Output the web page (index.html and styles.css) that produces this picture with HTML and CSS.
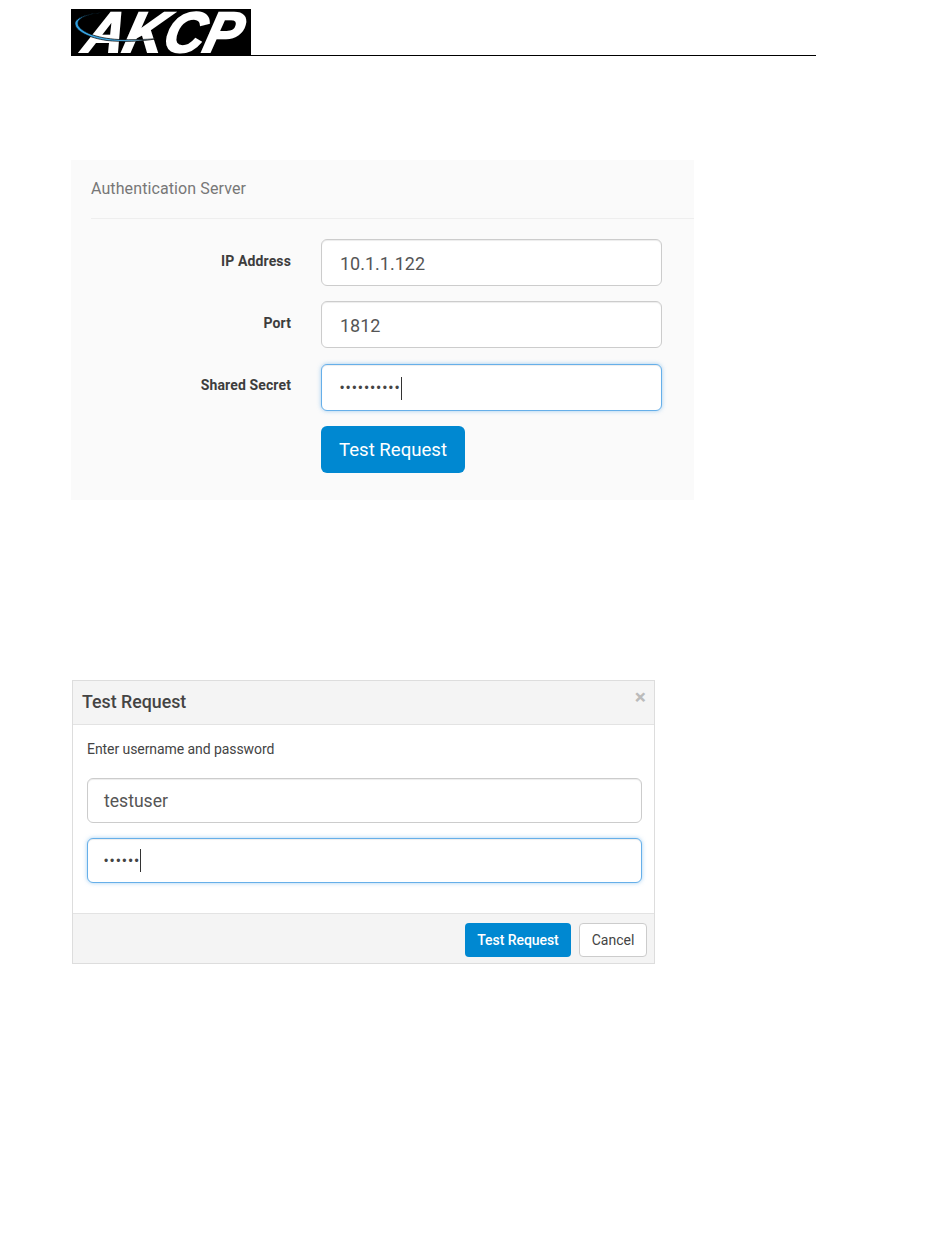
FILE: index.html
```html
<!DOCTYPE html>
<html lang="en">
<head>
<meta charset="utf-8">
<title>AKCP Test Request</title>
<link rel="stylesheet" href="styles.css">
</head>
<body>
<header class="page-header">
  <svg class="logo" width="180" height="46" viewBox="0 0 180 46" role="img" aria-label="AKCP">
    <defs>
      <linearGradient id="swoosh" x1="0" y1="0" x2="1" y2="0">
        <stop offset="0" stop-color="#2f9fe0"/>
        <stop offset="0.6" stop-color="#4fb2e8"/>
        <stop offset="1" stop-color="#cfe9f7"/>
      </linearGradient>
    </defs>
    <rect width="180" height="46" fill="#000"/>
    <text class="logo-text" transform="translate(10 43) skewX(-14)" textLength="157" lengthAdjust="spacingAndGlyphs">AKCP</text>
    <path d="M32 3.500C17 5 6.500 9 7 14.500C7.500 22 25 29.500 48 30.500C60 31 74 30.500 85 29.800C72 32.500 50 33.200 36 31.500C18 29 4 22 4 14.500C4 9 16 4.500 32 3.500Z" fill="url(#swoosh)" stroke="#000" stroke-width="0.7"/>
  </svg>
</header>

<section class="panel">
  <h2 class="panel-title">Authentication Server</h2>
  <div class="form">
    <div class="row">
      <div class="label">IP Address</div>
      <div class="field">10.1.1.122</div>
    </div>
    <div class="row">
      <div class="label">Port</div>
      <div class="field">1812</div>
    </div>
    <div class="row">
      <div class="label">Shared Secret</div>
      <div class="field focus"><span class="dots">••••••••••</span><span class="caret"></span></div>
    </div>
    <div class="row">
      <div class="label"></div>
      <div class="btn btn-large">Test Request</div>
    </div>
  </div>
</section>

<section class="modal">
  <div class="modal-head">
    <h3 class="modal-title">Test Request</h3>
    <span class="close">×</span>
  </div>
  <div class="modal-body">
    <p class="prompt">Enter username and password</p>
    <div class="field field-modal">testuser</div>
    <div class="field field-modal focus"><span class="dots">••••••</span><span class="caret caret-modal"></span></div>
  </div>
  <div class="modal-foot">
    <div class="btn btn-small">Test Request</div>
    <div class="btn-cancel">Cancel</div>
  </div>
</section>
</body>
</html>
```

FILE: styles.css
```css
* { box-sizing: border-box; }
html, body { margin: 0; padding: 0; background: #fff; }
body {
  width: 950px;
  height: 1260px;
  overflow: hidden;
  font-family: Roboto, "Liberation Sans", sans-serif;
  color: #444;
}
.page-header {
  margin: 9px 0 0 71px;
  width: 745px;
  height: 47px;
  border-bottom: 1px solid #000;
}
.logo { display: block; overflow: visible; }
.logo-text {
  font-family: "Liberation Sans", sans-serif;
  font-weight: 700;
  font-style: italic;
  font-size: 57px;
  fill: #fff;
  stroke: #fff;
  stroke-width: 2px;
}
.panel {
  margin: 104px 0 0 71px;
  width: 623px;
  height: 340px;
  background: #fafafa;
  padding-left: 20px;
}
.panel-title {
  margin: 0;
  height: 59px;
  padding-top: 19px;
  font-size: 16px;
  line-height: 19px;
  font-weight: 400;
  letter-spacing: 0.1px;
  color: #777;
  border-bottom: 1px solid #eee;
}
.form {
  display: flex;
  flex-direction: column;
  gap: 15.4px;
  padding-top: 20px;
}
.row { display: flex; gap: 30px; }
.label {
  width: 200px;
  text-align: right;
  font-size: 14px;
  line-height: 17px;
  font-weight: 700;
  letter-spacing: 0.12px;
  color: #3d3d3d;
  padding-top: 13.6px;
}
.field {
  width: 341px;
  height: 47px;
  display: flex;
  align-items: center;
  padding: 2px 18px 0;
  background: #fff;
  border: 1px solid #ccc;
  border-radius: 6px;
  font-size: 18px;
  color: #555;
  box-shadow: inset 0 1px 1px rgba(0,0,0,.075);
}
.focus {
  border-color: #66afe9;
  box-shadow: inset 0 1px 1px rgba(0,0,0,.075), 0 0 4px rgba(102,175,233,.6);
}
.dots {
  font-family: "Liberation Sans", sans-serif;
  font-size: 12px;
  letter-spacing: 1.9px;
  color: #444;
}
.caret {
  width: 1px;
  height: 23px;
  background: #333;
}
.caret-modal { margin-left: -1px; }
.btn {
  background: #0088d1;
  color: #fff;
  border-radius: 6px;
  display: flex;
  align-items: center;
  justify-content: center;
}
.btn-large {
  width: 144px;
  height: 47px;
  font-size: 18.6px;
}
.modal {
  margin: 180px 0 0 72px;
  width: 583px;
  height: 284px;
  border: 1px solid #ddd;
  display: flex;
  flex-direction: column;
}
.modal-head {
  height: 44px;
  background: #f4f4f4;
  border-bottom: 1px solid #e3e3e3;
  display: flex;
  justify-content: space-between;
  padding: 0 8px 0 9px;
}
.modal-title {
  margin: 0;
  font-size: 17.8px;
  line-height: 21px;
  font-weight: 500;
  color: #444;
  padding-top: 10px;
}
.close {
  font-size: 21px;
  line-height: 25px;
  font-weight: 700;
  color: #bbb;
  padding-top: 4px;
}
.modal-body {
  flex: 1;
  padding: 15px 13px 0 14px;
  display: flex;
  flex-direction: column;
  gap: 15px;
}
.prompt {
  margin: 0 0 5px;
  font-size: 14px;
  line-height: 18px;
  letter-spacing: -0.07px;
  color: #444;
}
.field-modal {
  width: 555px;
  height: 45px;
  padding: 0 16px;
  font-size: 17.6px;
}
.modal-foot {
  height: 50px;
  background: #f4f4f4;
  border-top: 1px solid #e3e3e3;
  display: flex;
  justify-content: flex-end;
  gap: 8px;
  padding: 9px 7px 0 0;
}
.btn-small {
  width: 106px;
  height: 34px;
  font-size: 14px;
  letter-spacing: -0.06px;
  font-weight: 500;
  border-radius: 4px;
}
.btn-cancel {
  width: 68px;
  height: 34px;
  background: #fff;
  border: 1px solid #ccc;
  border-radius: 4px;
  font-size: 14px;
  color: #444;
  display: flex;
  align-items: center;
  justify-content: center;
}
```
